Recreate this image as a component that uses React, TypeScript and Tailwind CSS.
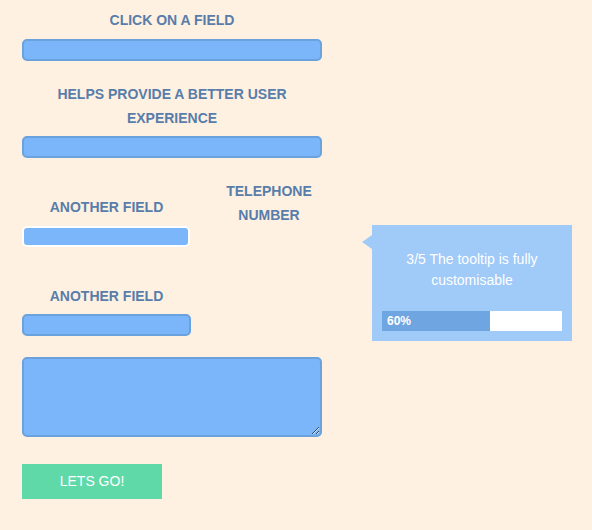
import React from 'react';

const label = "block text-center text-[14px] leading-[24px] font-bold uppercase text-[#587daa]";
const field = "block h-[22px] rounded-[5px] border-2 border-[#6aa2de] bg-[#7cb6fa] outline-none";

export default function App() {
  return (
    <div className="relative min-h-screen bg-[#fff1e1] font-['Liberation_Sans',Arial,sans-serif]">
      <form className="flex flex-col pl-[22px] pt-[8px]" onSubmit={e => e.preventDefault()}>
        {/* Field 1 */}
        <div className="w-[300px]">
          <label className={label}>Click on a field</label>
          <input className={`${field} mt-[7px] w-[300px]`} />
        </div>

        {/* Field 2 */}
        <div className="mt-[21px] w-[300px]">
          <label className={label}>Helps provide a better user experience</label>
          <input className={`${field} mt-[6px] w-[300px]`} />
        </div>

        {/* Two-column row */}
        <div className="mt-[21px] flex items-start">
          <div className="mt-[16px] w-[169px]">
            <label className={label}>Another field</label>
            <input className="mt-[7px] block h-[21px] w-[168px] rounded-[5px] border-2 border-white bg-[#7cb6fa] outline-none" />
          </div>
          <div className="ml-[13px] w-[130px]">
            <label className={label}>Telephone number</label>
          </div>
        </div>

        {/* Field 4 */}
        <div className="mt-[37px] w-[169px]">
          <label className={label}>Another field</label>
          <input className={`${field} mt-[6px] w-[169px]`} />
        </div>

        <textarea className="mt-[21px] block h-[80px] w-[300px] rounded-[5px] border-2 border-[#6aa2de] bg-[#7cb6fa] outline-none" />

        <button type="submit" className="mt-[27px] h-[35px] w-[140px] bg-[#60d9a9] text-[14px] text-white uppercase">
          Lets go!
        </button>
      </form>

      {/* Tooltip */}
      <div className="absolute left-[372px] top-[225px] w-[200px] h-[116px] bg-[#a0caf8] px-[10px] pt-[24px]">
        <div className="absolute left-[-10px] top-[10px] h-0 w-0 border-y-[7px] border-r-[10px] border-y-transparent border-r-[#a0caf8]" />
        <p className="text-center text-[14px] leading-[21px] text-white">3/5 The tooltip is fully customisable</p>
        <div className="mt-[20px] flex h-[20px] w-[180px] bg-white">
          <div className="flex h-full items-center bg-[#6fa5e0] pl-[5px] text-[12px] font-bold text-white" style={{ width: '60%' }}>
            60%
          </div>
        </div>
      </div>
    </div>
  );
}
